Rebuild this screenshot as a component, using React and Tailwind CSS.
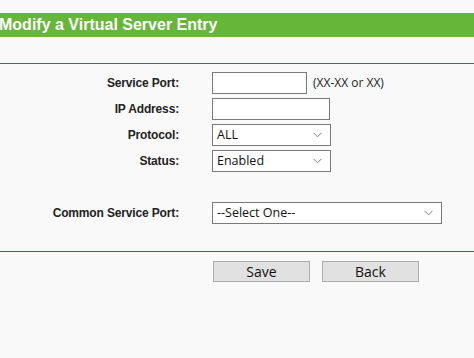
import React from 'react';

const Chevron = () => (
  <svg width="9" height="6" viewBox="0 0 9 6" className="shrink-0">
    <path d="M0.5 0.8 L4.5 4.8 L8.5 0.8" fill="none" stroke="#7a7a7a" strokeWidth="1" />
  </svg>
);

const Select = ({ value, width }) => (
  <div className={`flex items-center justify-between h-[22px] bg-white border border-[#7a7a7a] pl-[4px] pr-[8px] ${width}`}>
    <span className="text-[12.5px] text-[#111] leading-none pt-px font-['Open_Sans',sans-serif]">{value}</span>
    <Chevron />
  </div>
);

const Label = ({ children }) => (
  <span className="text-right text-[12px] font-bold text-[#222] font-['Liberation_Sans',Arial,sans-serif] tracking-[-0.15px]">
    {children}
  </span>
);

const App = () => {
  return (
    <div className="w-[474px] h-[358px] bg-[#f9f9f9] overflow-hidden pt-[13px]">
      {/* Title bar */}
      <div className="h-[24px] bg-[#66b63a] flex items-center">
        <h1 className="-ml-px text-[16px] font-bold text-white font-['Liberation_Sans',Arial,sans-serif] leading-none">
          Modify a Virtual Server Entry
        </h1>
      </div>

      <div className="h-[26px]" />
      <div className="h-px bg-[#2f7a4c]" />

      {/* Form */}
      <div className="pt-[6px] grid grid-cols-[179px_auto] gap-x-[33px] auto-rows-[26px] items-center">
        <Label>Service Port:</Label>
        <div className="flex items-center gap-[6px]">
          <div className="w-[95px] h-[22px] bg-white border border-[#7a7a7a]" />
          <span className="text-[12px] text-[#222] font-['Open_Sans',sans-serif]">(XX-XX or XX)</span>
        </div>

        <Label>IP Address:</Label>
        <div className="w-[118px] h-[22px] bg-white border border-[#7a7a7a]" />

        <Label>Protocol:</Label>
        <Select value="ALL" width="w-[119px]" />

        <Label>Status:</Label>
        <Select value="Enabled" width="w-[119px]" />

        <div />
        <div />

        <Label>Common Service Port:</Label>
        <Select value="--Select One--" width="w-[230px]" />
      </div>

      <div className="h-[25px]" />
      <div className="h-px bg-[#2f7a4c]" />

      {/* Actions */}
      <div className="pt-[9px] pl-[213px] flex gap-[12px]">
        <button className="w-[97px] h-[21px] bg-[#e1e1e1] border border-[#adadad] text-[14px] text-[#111] leading-none pt-px font-['Open_Sans',sans-serif]">
          Save
        </button>
        <button className="w-[97px] h-[21px] bg-[#e1e1e1] border border-[#adadad] text-[14px] text-[#111] leading-none pt-px font-['Open_Sans',sans-serif]">
          Back
        </button>
      </div>
    </div>
  );
};

export default App;
